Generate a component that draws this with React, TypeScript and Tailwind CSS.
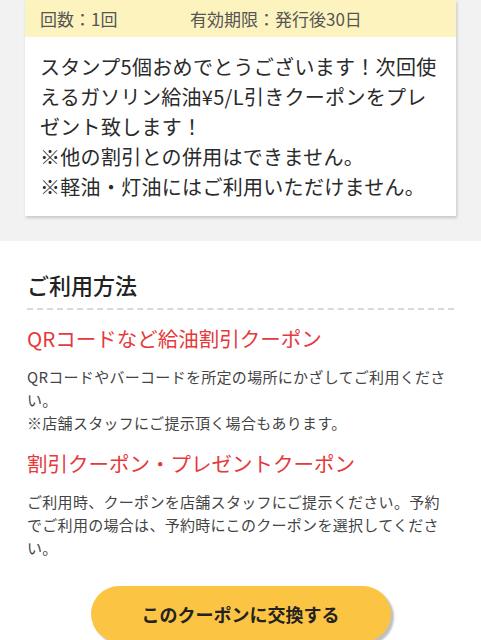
import React from 'react';

const font = { fontFamily: '"Noto Sans CJK JP", "Noto Sans", sans-serif' };

interface UsageItem {
  title: string;
  lines: string[];
}

const usage: UsageItem[] = [
  {
    title: 'QRコードなど給油割引クーポン',
    lines: ['QRコードやバーコードを所定の場所にかざしてご利用くださ', 'い。', '※店舗スタッフにご提示頂く場合もあります。'],
  },
  {
    title: '割引クーポン・プレゼントクーポン',
    lines: ['ご利用時、クーポンを店舗スタッフにご提示ください。予約', 'でご利用の場合は、予約時にこのクーポンを選択してくださ', 'い。'],
  },
];

export default function App() {
  return (
    <div className="w-[481px] h-[640px] overflow-hidden bg-white" style={font}>
      {/* Coupon card */}
      <div className="bg-[#f2f2f2] px-[25px] pb-[25px]">
        <div className="bg-white shadow-[1px_2px_3px_rgba(0,0,0,0.18)]">
          <div className="h-[37px] bg-[#fcf3bf] flex items-center pl-[15px] text-[17px] text-[#555]">
            <span className="w-[150px]">回数：1回</span>
            <span>有効期限：発行後30日</span>
          </div>
          <div className="px-[15px] pt-[15px] pb-[14px] text-[20px] leading-[30px] text-[#2a2a2a] whitespace-nowrap tracking-[0.3px]">
            <p>スタンプ5個おめでとうございます！次回使</p>
            <p>えるガソリン給油¥5/L引きクーポンをプレ</p>
            <p>ゼント致します！</p>
            <p>※他の割引との併用はできません。</p>
            <p>※軽油・灯油にはご利用いただけません。</p>
          </div>
        </div>
      </div>

      {/* How to use */}
      <div className="px-[27px] pt-[28px]">
        <h2 className="text-[22px] leading-[30px] font-medium text-[#222]">ご利用方法</h2>
        <div className="mt-[9px] border-t-2 border-dashed border-[#d9d9d9]" />
        {usage.map((u, i) => (
          <div key={i} className={i === 0 ? 'mt-[14px]' : 'mt-[15px]'}>
            <h3 className="text-[20.5px] leading-[28px] text-[#e5393c] whitespace-nowrap">{u.title}</h3>
            <div className="mt-[13px] text-[15px] leading-[23px] text-[#444] whitespace-nowrap tracking-[0.3px]">
              {u.lines.map((l, j) => (
                <p key={j}>{l}</p>
              ))}
            </div>
          </div>
        ))}
        <div className="flex justify-center mt-[27px]">
          <button className="w-[300px] h-[56px] rounded-full bg-[#fcc443] shadow-[3px_3px_2px_rgba(0,0,0,0.25)] text-[18px] font-bold text-[#222]">
            このクーポンに交換する
          </button>
        </div>
      </div>
    </div>
  );
}
